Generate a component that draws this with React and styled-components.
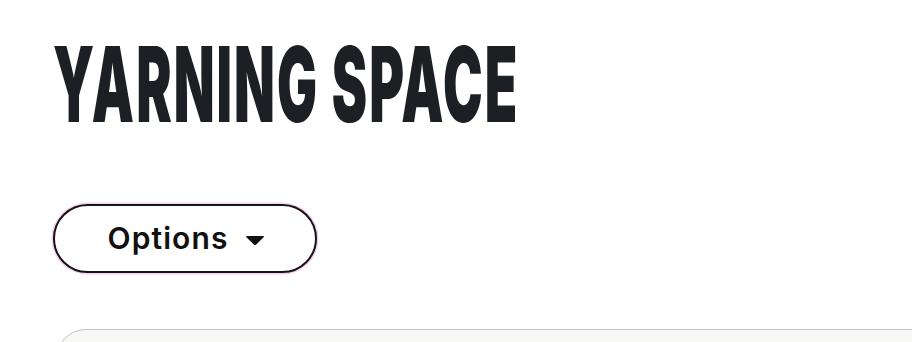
import React from 'react';
import styled, { createGlobalStyle } from 'styled-components';

const GlobalStyle = createGlobalStyle`
  html, body {
    margin: 0;
    padding: 0;
    background: #ffffff;
    overflow: hidden;
  }
`;

const Page = styled.div`
  width: 912px;
  height: 342px;
  overflow: hidden;
  padding: 0 0 0 53px;
  box-sizing: border-box;
  display: flex;
  flex-direction: column;
  align-items: flex-start;
`;

const Title = styled.h1`
  flex-shrink: 0;
  margin: 32px 0 0 0;
  font-family: Inter, "Liberation Sans", sans-serif;
  font-weight: 900;
  font-size: 104px;
  line-height: 104px;
  height: 104px;
  color: #1c2024;
  letter-spacing: 4px;
  white-space: nowrap;
  transform: scaleX(0.511);
  transform-origin: left center;
`;

const OptionsButton = styled.button`
  flex-shrink: 0;
  margin-top: 68px;
  width: 264px;
  height: 69px;
  box-sizing: border-box;
  border: 2.5px solid #141414;
  border-radius: 40px;
  background: #ffffff;
  box-shadow: 0 0 0 1.5px #f6d0f2;
  display: flex;
  align-items: center;
  justify-content: center;
  gap: 16px;
  padding: 0 0 2px 2px;
  font-family: Inter, "Liberation Sans", sans-serif;
  font-weight: 600;
  font-size: 30px;
  letter-spacing: 1.1px;
  color: #111111;
  cursor: pointer;
`;

const Caret = styled.svg`
  width: 20px;
  height: 11px;
  margin-top: 5px;
`;

const Card = styled.div`
  flex-shrink: 0;
  margin-top: 56px;
  margin-left: 3px;
  width: 900px;
  height: 80px;
  box-sizing: border-box;
  background: #f8f8f7;
  border: 1px solid #c2c2c2;
  border-radius: 30px;
`;

export default function App() {
  return (
    <>
      <GlobalStyle />
      <Page>
        <Title>YARNING SPACE</Title>
        <OptionsButton type="button">
          Options
          <Caret viewBox="0 0 20 11">
            <path d="M2 1 H18 Q19.6 1 18.6 2.2 L11.2 9.6 Q10 10.8 8.8 9.6 L1.4 2.2 Q0.4 1 2 1 Z" fill="#111" />
          </Caret>
        </OptionsButton>
        <Card />
      </Page>
    </>
  );
}
